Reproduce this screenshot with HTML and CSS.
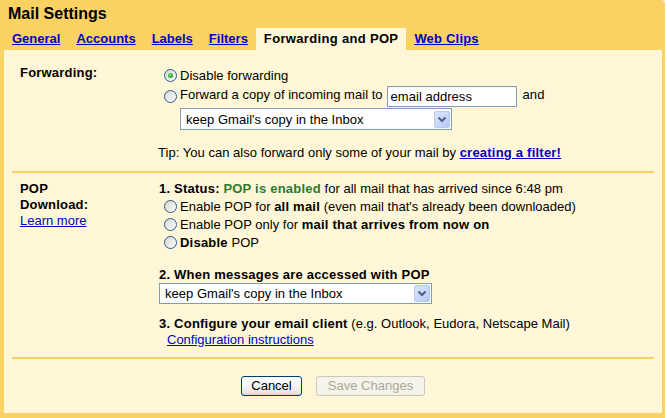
FILE: index.html
```html
<!DOCTYPE html>
<html>
<head>
<meta charset="utf-8">
<link rel="stylesheet" href="styles.css">
</head>
<body>
<div class="app">
  <div class="title">Mail Settings</div>
  <div class="tabs">
    <a class="tab" href="#">General</a>
    <a class="tab" href="#">Accounts</a>
    <a class="tab" href="#">Labels</a>
    <a class="tab" href="#">Filters</a>
    <span class="tab active">Forwarding and POP</span>
    <a class="tab clips" href="#">Web Clips</a>
  </div>
  <div class="panel">
    <div class="section fwd">
      <div class="label fwd-label">Forwarding:</div>
      <div class="body fwd-body">
        <div class="opt r1"><span class="radio on"></span><span>Disable forwarding</span></div>
        <div class="opt r2"><span class="radio"></span><span class="lift">Forward a copy of incoming mail to</span><span class="input">email address</span><span class="lift">and</span></div>
        <div class="select s1"><span class="sel-text">keep Gmail's copy in the Inbox</span><span class="arrow"><svg width="16" height="17" viewBox="0 0 16 17"><path d="M4.5 6.5 L8 10 L11.5 6.5" fill="none" stroke="#4D6185" stroke-width="2"/></svg></span></div>
        <div class="tip">Tip: You can also forward only some of your mail by <a class="blink" href="#">creating a filter!</a></div>
      </div>
    </div>
    <div class="section pop">
      <div class="label pop-label">
        <div class="ln">POP</div>
        <div class="ln">Download:</div>
        <div class="ln"><a class="link" href="#">Learn more</a></div>
      </div>
      <div class="body pop-body">
        <div class="ln"><b>1. Status:</b> <b class="green">POP is enabled</b> for all mail that has arrived since 6:48 pm</div>
        <div class="opt r3"><span class="radio"></span><span>Enable POP for <b>all mail</b> (even mail that's already been downloaded)</span></div>
        <div class="opt r3"><span class="radio"></span><span>Enable POP only for <b>mail that arrives from now on</b></span></div>
        <div class="opt r3"><span class="radio"></span><span><b>Disable</b> POP</span></div>
        <div class="ln step2"><b>2. When messages are accessed with POP</b></div>
        <div class="select s2"><span class="sel-text">keep Gmail's copy in the Inbox</span><span class="arrow"><svg width="16" height="17" viewBox="0 0 16 17"><path d="M4.5 6.5 L8 10 L11.5 6.5" fill="none" stroke="#4D6185" stroke-width="2"/></svg></span></div>
        <div class="ln step3"><b>3. Configure your email client</b> (e.g. Outlook, Eudora, Netscape Mail)</div>
        <div class="ln cfg"><a class="link" href="#">Configuration instructions</a></div>
      </div>
    </div>
    <div class="actions">
      <span class="btn cancel">Cancel</span>
      <span class="btn save">Save Changes</span>
    </div>
  </div>
</div>
</body>
</html>
```

FILE: styles.css
```css
html, body {
  margin: 0;
  padding: 0;
  background: #ffffff;
}

body {
  font-family: "Liberation Sans", Arial, sans-serif;
  font-size: 13px;
  color: #000000;
}

.app {
  width: 665px;
  height: 418px;
  background: #FAD163;
  border-top-right-radius: 4px;
  box-sizing: border-box;
  overflow: hidden;
}

.title {
  padding: 4px 8px 0 8px;
  height: 20px;
  line-height: 20px;
  font-size: 16px;
  font-weight: bold;
}

.tabs {
  display: flex;
  margin-top: 4px;
  padding-left: 4px;
  height: 22px;
}

.tab {
  padding: 0 8px;
  line-height: 22px;
  font-weight: bold;
  color: #0000CC;
  text-decoration: underline;
}

.tab.active {
  background: #FFF7D7;
  color: #000000;
  text-decoration: none;
  letter-spacing: 0.33px;
}

.tab.clips {
  letter-spacing: 0.2px;
}

.panel {
  margin-left: 4px;
  width: 658px;
  height: 363px;
  background: #FFF7D7;
  box-sizing: border-box;
  padding: 0 8px;
  letter-spacing: 0.03px;
}

.panel b {
  letter-spacing: 0.22px;
}

.section {
  display: grid;
  grid-template-columns: 139px 1fr;
  padding-left: 8px;
  border-bottom: 2px solid #FAD163;
}

.label {
  font-weight: bold;
  line-height: 16px;
  align-self: start;
  letter-spacing: 0.2px;
}

.ln {
  line-height: 16px;
  height: 16px;
  white-space: nowrap;
}

.fwd {
  padding-bottom: 10px;
}

.fwd-label {
  margin-top: 15px;
}

.fwd-body {
  margin-top: 16px;
}

.opt {
  display: flex;
  align-items: center;
  white-space: nowrap;
}

.r1 {
  height: 19px;
}

.r2 {
  height: 22px;
}

.r3 {
  height: 18px;
}

.lift {
  padding-bottom: 4px;
}

.radio {
  width: 13px;
  height: 13px;
  box-sizing: border-box;
  border-radius: 50%;
  border: 1px solid #2A5A8A;
  background: linear-gradient(135deg, #D4D4CC 0%, #EEEEEA 55%, #FFFFFF 100%);
  margin: 0 3px 0 5px;
  flex: none;
  display: flex;
  align-items: center;
  justify-content: center;
}

.radio.on::after {
  content: "";
  width: 5px;
  height: 5px;
  border-radius: 50%;
  background: radial-gradient(circle at 40% 40%, #7CE87C 0%, #2DB02D 55%, #1A8A1A 100%);
}

.input {
  width: 130px;
  height: 21px;
  box-sizing: border-box;
  border: 1px solid #7F9DB9;
  background: #ffffff;
  line-height: 19px;
  padding-left: 3px;
  margin: 0 6px 0 4px;
  font-size: 13px;
}

.select {
  display: flex;
  align-items: center;
  justify-content: space-between;
  box-sizing: border-box;
  border: 1px solid #7F9DB9;
  background: #ffffff;
  padding: 0 1px 0 5px;
}

.s1 {
  margin-left: 21px;
  margin-top: 1px;
  width: 272px;
  height: 22px;
}

.s2 {
  width: 273px;
  height: 21px;
}

.sel-text {
  white-space: nowrap;
}

.arrow {
  width: 16px;
  height: 17px;
  box-sizing: border-box;
  border: 1px solid #B5C8F2;
  border-radius: 2px;
  background: linear-gradient(135deg, #DDE6FB 0%, #C6D5F8 60%, #B4C7F4 100%);
  display: flex;
}

.arrow svg {
  display: block;
  margin: -1px;
}

.tip {
  margin-top: 15px;
  margin-left: -1px;
  line-height: 16px;
  white-space: nowrap;
}

.blink {
  font-weight: bold;
  letter-spacing: 0.22px;
  color: #0000CC;
  text-decoration: underline;
}

.link {
  color: #0000CC;
  text-decoration: underline;
  font-weight: normal;
  letter-spacing: 0;
}

.pop {
  padding-bottom: 9px;
}

.pop-label {
  margin-top: 8px;
}

.pop-body {
  margin-top: 8px;
}

.green {
  color: #2B7A30;
}

.step2 {
  margin-top: 16px;
}

.step3 {
  margin-top: 12px;
}

.cfg {
  padding-left: 8px;
}

.actions {
  display: flex;
  justify-content: center;
  gap: 14px;
  padding-top: 17px;
}

.btn {
  height: 20px;
  box-sizing: border-box;
  border-radius: 3px;
  line-height: 18px;
  text-align: center;
  font-size: 13px;
  letter-spacing: 0;
}

.cancel {
  width: 61px;
  border: 1px solid #003C74;
  background: linear-gradient(180deg, #FFFFFF 0%, #F6F6F2 50%, #EAE8E0 85%, #D8D3C8 100%);
  color: #000000;
}

.save {
  width: 109px;
  border: 1px solid #CAC8BB;
  background: #F5F4EA;
  color: #ACA899;
}
```
